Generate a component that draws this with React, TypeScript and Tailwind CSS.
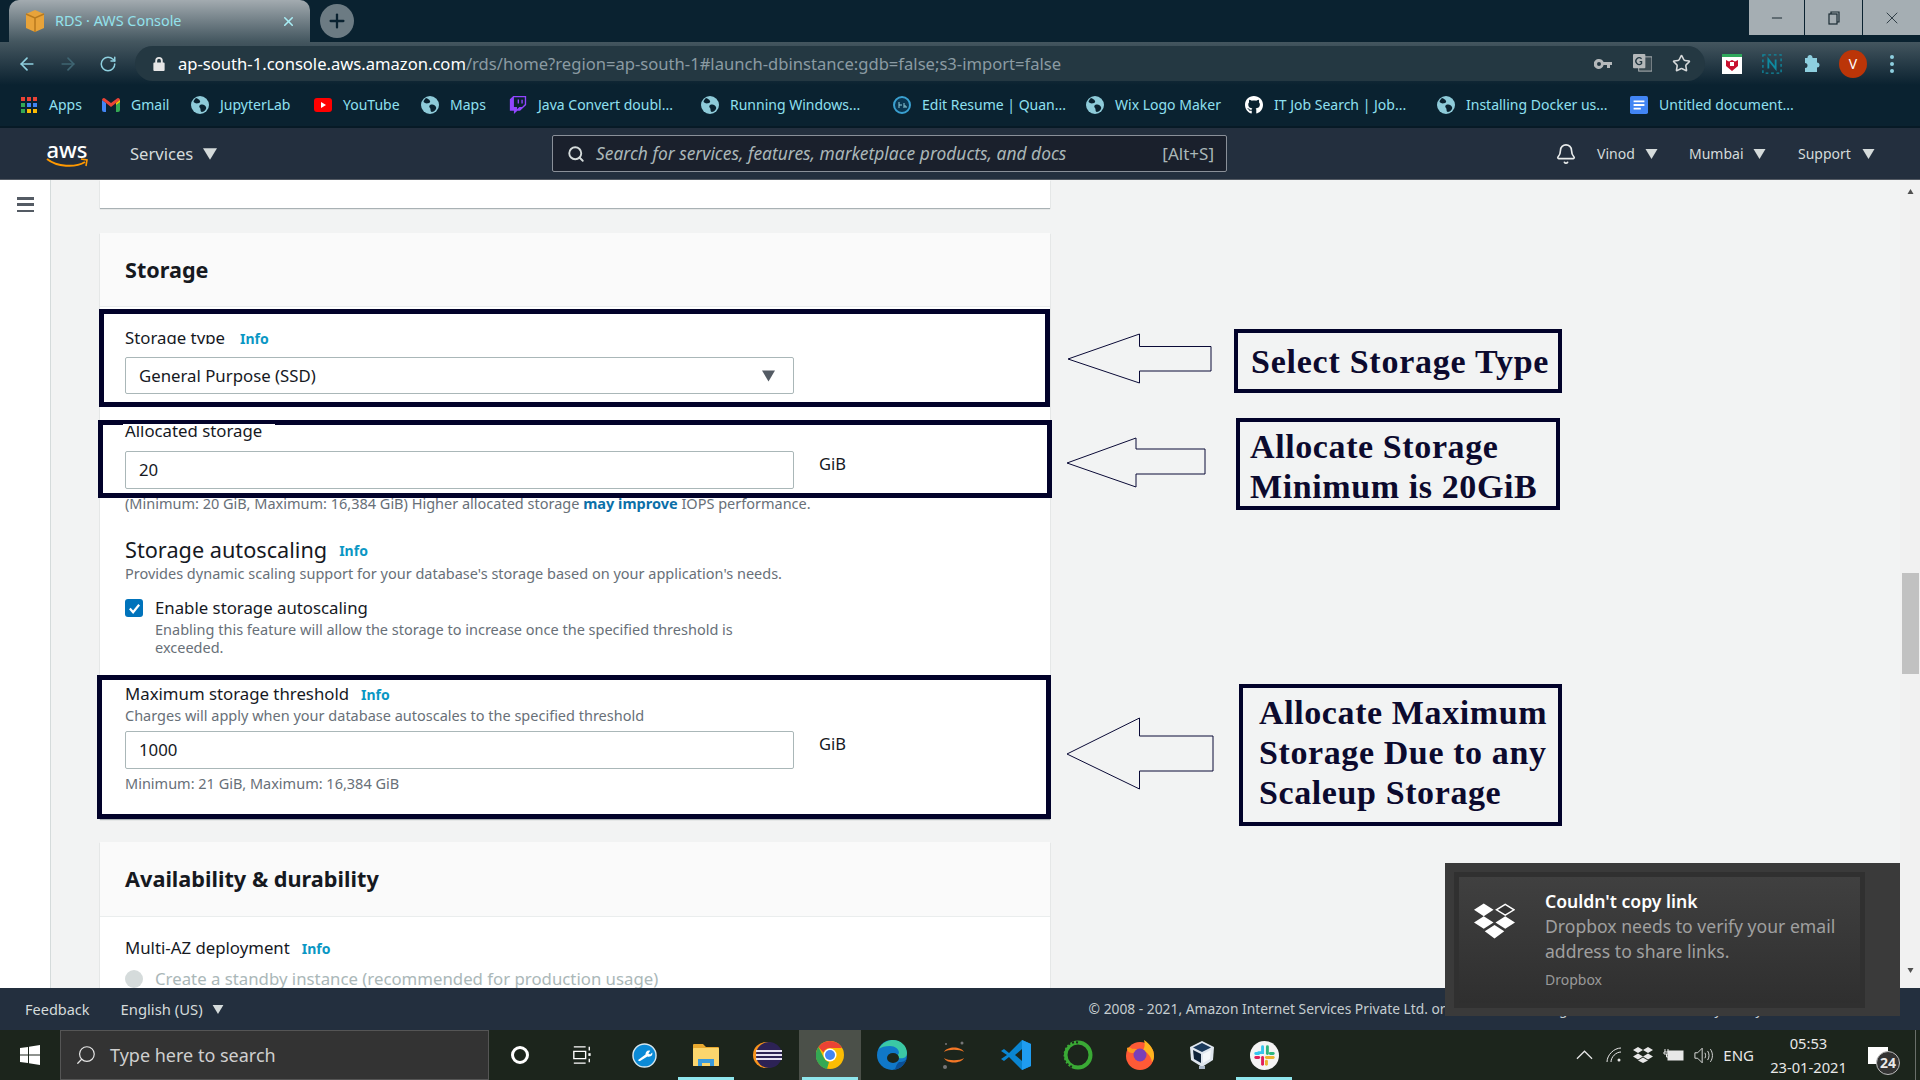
import { ArrowLeft, ArrowRight, RotateCw, Star, Bell, Search, Plus, X, Minus } from "lucide-react";
import { FaGithub, FaTwitch } from "react-icons/fa";
import type { ReactNode } from "react";

const Caret = ({ className }: { className: string }) => (
  <svg viewBox="0 0 12 10" className={`shrink-0 ${className}`}>
    <path d="M0 0h12L6 10z" fill="currentColor" />
  </svg>
);

const Globe = () => (
  <svg viewBox="0 0 18 18" className="w-[18px] h-[18px]">
    <circle cx="9" cy="9" r="9" fill="#8ecbd9" />
    <path d="M5 2c2 1 3 1 4 3S6 8 4 7 2 5 5 2zM9 9c3-1 5 0 6 2s-2 5-4 5-1-3-2-4-1-2 0-3z" fill="#0a2230" />
  </svg>
);

const Gmail = () => (
  <svg viewBox="0 0 18 14" className="w-[18px] h-[14px]">
    <path d="M0 2v10a2 2 0 0 0 2 2h2V5z" fill="#4285f4" />
    <path d="M18 2v10a2 2 0 0 1-2 2h-2V5z" fill="#34a853" />
    <path d="M0 2a2 2 0 0 1 3-1.6L9 5l6-4.6A2 2 0 0 1 18 2l-4 3-5 4-5-4z" fill="#ea4335" />
    <path d="M14 5l4-3v2l-4 3z" fill="#fbbc04" />
  </svg>
);

const Apps = () => (
  <div className="grid grid-cols-3 gap-[2px] w-[16px]">
    {["#ea4335", "#ea4335", "#ea4335", "#34a853", "#4285f4", "#4285f4", "#34a853", "#fbbc04", "#fbbc04"].map((c, i) => (
      <svg key={i} viewBox="0 0 4 4" className="w-[4px] h-[4px]">
        <rect width="4" height="4" fill={c} />
      </svg>
    ))}
  </div>
);

const YouTube = () => (
  <svg viewBox="0 0 18 14" className="w-[18px] h-[14px]">
    <rect width="18" height="14" rx="3" fill="#f00" />
    <path d="M7 4l5 3-5 3z" fill="#fff" />
  </svg>
);

const Doc = () => (
  <svg viewBox="0 0 20 20" className="w-[20px] h-[20px]">
    <rect width="20" height="20" rx="2" fill="#4285f4" />
    <path d="M4 5h12v2H4zM4 9h12v2H4zM4 13h8v2H4z" fill="#fff" />
  </svg>
);

const EditIcon = () => (
  <svg viewBox="0 0 18 18" className="w-[18px] h-[18px]">
    <circle cx="9" cy="9" r="8" fill="#0a3550" stroke="#3aa0d0" strokeWidth="2" />
    <path d="M6 6v6M6 9h3M11 7v5M11 10h2v2" stroke="#8ecbd9" strokeWidth="1" fill="none" />
  </svg>
);

const bookmarks: { label: string; width: string; icon: ReactNode }[] = [
  { label: "Apps", width: "w-[82px]", icon: <Apps /> },
  { label: "Gmail", width: "w-[89px]", icon: <Gmail /> },
  { label: "JupyterLab", width: "w-[123px]", icon: <Globe /> },
  { label: "YouTube", width: "w-[107px]", icon: <YouTube /> },
  { label: "Maps", width: "w-[88px]", icon: <Globe /> },
  { label: "Java Convert doubl...", width: "w-[192px]", icon: <FaTwitch className="w-[18px] h-[20px] text-[#9146ff]" /> },
  { label: "Running Windows...", width: "w-[192px]", icon: <Globe /> },
  { label: "Edit Resume | Quan...", width: "w-[193px]", icon: <EditIcon /> },
  { label: "Wix Logo Maker", width: "w-[159px]", icon: <Globe /> },
  { label: "IT Job Search | Job...", width: "w-[192px]", icon: <FaGithub className="w-[20px] h-[20px] text-white" /> },
  { label: "Installing Docker us...", width: "w-[193px]", icon: <Globe /> },
  { label: "Untitled document...", width: "w-[180px]", icon: <Doc /> },
];

const TabStrip = () => (
  <div className="h-[42px] bg-[#0a2230] flex items-end relative shrink-0">
    <div className="ml-[9px] w-[301px] h-[42px] rounded-t-[10px] bg-gradient-to-b from-[#a3abb0] to-[#43565f] flex items-center pl-[16px] pr-[14px]">
      <svg viewBox="0 0 20 22" className="w-[20px] h-[22px]">
        <path d="M10 0l9 4v14l-9 4-9-4V4z" fill="#e8a33a" />
        <path d="M10 8v14M1 4l9 4 9-4" stroke="#b87a1e" strokeWidth="1.5" fill="none" />
      </svg>
      <span className="ml-[10px] text-[14.4px] leading-[20px] -mt-[1px] text-[#93e2ec] flex-1">RDS · AWS Console</span>
      <X className="w-[15px] h-[15px] text-[#a9eef5]" strokeWidth={2.5} />
    </div>
    <div className="ml-[10px] mb-[4px] w-[34px] h-[34px] rounded-full bg-[#6c7b83] flex items-center justify-center">
      <Plus className="w-[22px] h-[22px] text-[#0a2230]" strokeWidth={2.5} />
    </div>
    <div className="ml-auto self-start flex h-[35px] bg-[#a5aeb3] divide-x divide-[#0a2230] text-[#1a2a33]">
      <div className="w-[56px] flex items-center justify-center"><Minus className="w-[16px] h-[16px]" strokeWidth={1.5} /></div>
      <div className="w-[58px] flex items-center justify-center">
        <svg viewBox="0 0 12 14" className="w-[12px] h-[14px]" fill="none" stroke="currentColor" strokeWidth="1.2">
          <rect x="1" y="3" width="8" height="10" />
          <path d="M3 3V1h8v10H9" />
        </svg>
      </div>
      <div className="w-[57px] flex items-center justify-center"><X className="w-[20px] h-[20px]" strokeWidth={1} /></div>
    </div>
  </div>
);

const Toolbar = () => (
  <div className="h-[43px] bg-gradient-to-b from-[#44565f] to-[#0a2230] flex items-center shrink-0 text-[#8fd0df]">
    <div className="w-[135px] flex items-center pl-[17px] gap-[21px]">
      <ArrowLeft className="w-[20px] h-[20px]" strokeWidth={2} />
      <ArrowRight className="w-[20px] h-[20px] text-[#3f6572]" strokeWidth={2} />
      <RotateCw className="w-[18px] h-[18px]" strokeWidth={2} />
    </div>
    <div className="w-[1570px] h-[35px] rounded-full bg-[#243842] flex items-center pl-[18px] pr-[14px]">
      <svg viewBox="0 0 12 16" className="w-[12px] h-[15px] text-[#e6e6e6]">
        <path d="M2 7V5a4 4 0 0 1 8 0v2h1a1 1 0 0 1 1 1v7a1 1 0 0 1-1 1H1a1 1 0 0 1-1-1V8a1 1 0 0 1 1-1zm2 0h4V5a2 2 0 0 0-4 0z" fill="currentColor" />
      </svg>
      <span className="ml-[13px] mt-[1px] text-[16.6px] leading-[24px] text-[#8b9ba3] flex-1 whitespace-nowrap">
        <span className="text-white">ap-south-1.console.aws.amazon.com</span>/rds/home?region=ap-south-1#launch-dbinstance:gdb=false;s3-import=false
      </span>
      <svg viewBox="0 0 18 10" className="w-[18px] h-[10px] text-[#b4b8ba] mr-[21px]">
        <path d="M5 0a5 5 0 0 1 4.6 3H18v3h-2v3h-3V6H9.6A5 5 0 1 1 5 0zm0 3a2 2 0 1 0 0 4 2 2 0 0 0 0-4z" fill="currentColor" />
      </svg>
      <svg viewBox="0 0 20 20" className="w-[19px] h-[19px] mr-[20px]">
        <rect x="6" y="3" width="14" height="15" fill="#3b4b53" stroke="#b4b8ba" />
        <rect x="0" y="0" width="13" height="15" rx="1" fill="#b4b8ba" />
        <path d="M9 5a3.5 3.5 0 1 0 0 5V8H7" stroke="#243842" strokeWidth="1.4" fill="none" />
      </svg>
      <Star className="w-[19px] h-[19px] text-[#d6d9da]" strokeWidth={2} />
    </div>
    <div className="flex items-center">
      <svg viewBox="0 0 20 20" className="ml-[17px] w-[20px] h-[20px]">
        <rect width="20" height="20" fill="#fff" />
        <rect width="20" height="3" fill="#2fa85c" />
        <path d="M4 6l3 1.500 3-1.500 3 1.500 3-1.500v6l-6 5-6-5z" fill="#c8102e" />
        <rect x="8" y="8" width="4" height="4" fill="#fff" />
      </svg>
      <svg viewBox="0 0 22 22" className="ml-[20px] w-[20px] h-[20px]">
        <rect x="1" y="1" width="20" height="20" fill="none" stroke="#0f8aa0" strokeWidth="1.5" strokeDasharray="3 3" />
        <path d="M7 16V6l8 10V6" fill="none" stroke="#0f8aa0" strokeWidth="2" />
      </svg>
      <svg viewBox="0 0 20 20" className="ml-[20px] w-[20px] h-[20px]">
        <path d="M8 1a2.500 2.500 0 0 1 2.500 3H15v4.500a2.500 2.500 0 1 1 0 5V18H3v-4a2.500 2.500 0 1 0 0-5V4h2.500A2.500 2.500 0 0 1 8 1z" fill="#8ecfdf" />
      </svg>
      <div className="ml-[17px] w-[28px] h-[28px] rounded-full bg-[#bb3508] flex items-center justify-center text-white text-[14px]">V</div>
      <div className="ml-[23px] flex flex-col gap-[3px]">
        <div className="w-[4px] h-[4px] rounded-full bg-[#8ecfdf]" />
        <div className="w-[4px] h-[4px] rounded-full bg-[#8ecfdf]" />
        <div className="w-[4px] h-[4px] rounded-full bg-[#8ecfdf]" />
      </div>
    </div>
  </div>
);

const BookmarkBar = () => (
  <div className="h-[43px] bg-[#0a2230] border-b-2 border-[#071a26] flex items-center pl-[20px] pb-[2px] text-[14px] text-[#8fe0f0] shrink-0 whitespace-nowrap">
    {bookmarks.map((b) => (
      <div key={b.label} className={`${b.width} flex items-center gap-[11px] shrink-0`}>
        <div className="w-[18px] flex items-center justify-center">{b.icon}</div>
        <span>{b.label}</span>
      </div>
    ))}
  </div>
);

const AwsNav = () => (
  <div className="h-[52px] bg-[#232f3e] border-b border-[#545b64] flex items-center shrink-0 text-[#d5dbdb] whitespace-nowrap">
    <div className="ml-[46px] w-[42px] flex flex-col items-center">
      <span className="text-[22px] leading-[18px] text-white font-medium">aws</span>
      <svg viewBox="0 0 42 10" className="w-[42px] h-[10px]">
        <path d="M1 1c10 8 28 9 38 3" stroke="#f90" strokeWidth="2" fill="none" />
        <path d="M35 1l6 1-1 6" stroke="#f90" strokeWidth="1.6" fill="none" />
      </svg>
    </div>
    <span className="ml-[42px] w-[65px] text-[16.6px] leading-[24px]">Services</span>
    <Caret className="ml-[8px] w-[14px] h-[12px]" />
    <div className="ml-[335px] w-[675px] h-[37px] bg-[#1a202c] border border-[#8a9099] rounded-[2px] flex items-center pl-[14px] pr-[12px] shrink-0">
      <Search className="w-[18px] h-[18px] text-[#d5dbdb]" strokeWidth={2.5} />
      <span className="ml-[11px] flex-1 italic text-[17.400px] text-[#aab7b8]">Search for services, features, marketplace products, and docs</span>
      <span className="text-[17px] text-[#aab7b8]">[Alt+S]</span>
    </div>
    <Bell className="ml-[328px] w-[22px] h-[24px] text-[#e8ecec]" strokeWidth={1.8} />
    <span className="ml-[20px] mt-[1px] w-[39px] text-[14px] leading-[20px]">Vinod</span>
    <Caret className="ml-[9px] w-[13px] h-[10px]" />
    <span className="ml-[31px] mt-[1px] w-[56px] text-[14px] leading-[20px]">Mumbai</span>
    <Caret className="ml-[8px] w-[13px] h-[10px]" />
    <span className="ml-[32px] mt-[1px] w-[57px] text-[14px] leading-[20px]">Support</span>
    <Caret className="ml-[7px] w-[13px] h-[10px]" />
  </div>
);

const InfoLink = ({ className = "" }: { className?: string }) => (
  <span className={`text-[14px] leading-[20px] font-bold text-[#0a97c4] ${className}`}>Info</span>
);

const Field = ({ children, suffix }: { children: ReactNode; suffix?: boolean }) => (
  <div className="flex items-start">
    <div className="w-[669px] h-[38px] border border-[#aab7b8] rounded-[2px] bg-white flex items-center px-[13px] text-[16.800px] text-[#16191f]">
      {children}
    </div>
    {suffix && <span className="ml-[25px] mt-[3px] text-[16.500px] leading-[20px] text-[#16191f]">GiB</span>}
  </div>
);

const StorageCard = () => (
  <div className="mt-[25px] bg-white shadow-[0_1px_1px_0_rgba(0,28,36,0.3)]">
    <div className="h-[74px] bg-[#fafafa] border-b border-[#eaeded] flex items-center pl-[25px] pt-[1px]">
      <h2 className="text-[21.600px] font-bold text-[#16191f]">Storage</h2>
    </div>
    <div className="pl-[25px] pb-[26px] text-[#16191f]">
      <div className="mt-[21px] h-[20px] flex items-start">
        <span className="block h-[16px] overflow-hidden text-[16.800px] leading-[20px]">Storage type</span>
        <InfoLink className="ml-[15px] mt-[1px]" />
      </div>
      <div className="mt-[9px]">
        <div className="w-[669px] h-[37px] border border-[#aab7b8] rounded-[2px] flex items-center justify-between pl-[13px] pr-[18px] text-[16.800px]">
          <span>General Purpose (SSD)</span>
          <Caret className="w-[13px] h-[12px] text-[#545b64]" />
        </div>
      </div>
      <div className="mt-[27px] text-[16.800px] leading-[20px]">Allocated storage</div>
      <div className="mt-[10px]">
        <Field suffix>20</Field>
      </div>
      <p className="mt-[4px] text-[14.500px] leading-[20px] text-[#687078]">
        (Minimum: 20 GiB, Maximum: 16,384 GiB) Higher allocated storage <span className="font-bold text-[#0b6fa8]">may improve</span> IOPS performance.
      </p>
      <div className="mt-[23px] h-[27px] flex items-center">
        <span className="text-[21.700px] leading-[26px]">Storage autoscaling</span>
        <InfoLink className="ml-[12px] mt-[3px]" />
      </div>
      <p className="text-[14.500px] leading-[20px] text-[#687078]">Provides dynamic scaling support for your database's storage based on your application's needs.</p>
      <div className="mt-[15px] flex items-start">
        <div className="mt-[1px] w-[18px] h-[18px] rounded-[3px] bg-[#0073bb] flex items-center justify-center">
          <svg viewBox="0 0 14 14" className="w-[13px] h-[13px]">
            <path d="M2 7l3.500 4L12 3" fill="none" stroke="#fff" strokeWidth="2.4" />
          </svg>
        </div>
        <div className="ml-[12px]">
          <div className="text-[16.800px] leading-[20px]">Enable storage autoscaling</div>
          <p className="mt-[2px] w-[610px] text-[14.500px] leading-[18px] text-[#687078]">
            Enabling this feature will allow the storage to increase once the specified threshold is exceeded.
          </p>
        </div>
      </div>
      <div className="mt-[28px] flex items-start">
        <span className="text-[16.800px] leading-[20px]">Maximum storage threshold</span>
        <InfoLink className="ml-[12px] mt-[1px]" />
      </div>
      <p className="text-[14.500px] leading-[20px] text-[#687078]">Charges will apply when your database autoscales to the specified threshold</p>
      <div className="mt-[6px]">
        <Field suffix>1000</Field>
      </div>
      <p className="mt-[4px] text-[14.500px] leading-[20px] text-[#687078]">Minimum: 21 GiB, Maximum: 16,384 GiB</p>
    </div>
  </div>
);

const AvailabilityCard = () => (
  <div className="mt-[23px] bg-white shadow-[0_1px_1px_0_rgba(0,28,36,0.3)]">
    <div className="h-[75px] bg-[#fafafa] border-b border-[#eaeded] flex items-center pl-[25px]">
      <h2 className="text-[21.700px] font-bold text-[#16191f]">Availability & durability</h2>
    </div>
    <div className="pl-[25px] pb-[20px]">
      <div className="mt-[21px] flex items-start">
        <span className="text-[16.800px] leading-[20px] text-[#16191f]">Multi-AZ deployment</span>
        <InfoLink className="ml-[12px] mt-[1px]" />
      </div>
      <div className="mt-[10px] flex items-center">
        <div className="w-[18px] h-[18px] rounded-full bg-[#d5dbdb]" />
        <span className="ml-[12px] text-[16.800px] leading-[20px] text-[#aab7b8]">Create a standby instance (recommended for production usage)</span>
      </div>
    </div>
  </div>
);

const Footer = () => (
  <div className="h-[42px] pt-[1px] bg-[#232f3e] flex items-center shrink-0 text-[14.500px] text-[#d5dbdb] whitespace-nowrap">
    <span className="ml-[25px]">Feedback</span>
    <span className="ml-[31px] text-[14.800px]">English (US)</span>
    <Caret className="ml-[9px] w-[12px] h-[9px]" />
    <span className="ml-[865px] text-[13.800px] text-[#c5cdd0]">
      © 2008 - 2021, Amazon Internet Services Private Ltd. or its affiliates. All rights reserved.
      <span className="ml-[24px]">Privacy Policy</span>
      <span className="ml-[24px]">Terms of Use</span>
    </span>
  </div>
);

const ChromeIcon = () => (
  <svg viewBox="0 0 28 28" className="w-[28px] h-[28px]">
    <circle cx="14" cy="14" r="14" fill="#fbbc04" />
    <path d="M14 0a14 14 0 0 1 12.100 7H14a7 7 0 0 0-6.500 4.500L2.500 6A14 14 0 0 1 14 0z" fill="#ea4335" />
    <path d="M2.500 6l5.500 11a7 7 0 0 0 5 4l-2 7A14 14 0 0 1 2.500 6z" fill="#34a853" />
    <circle cx="14" cy="14" r="6.500" fill="#fff" />
    <circle cx="14" cy="14" r="5" fill="#4285f4" />
  </svg>
);

const EdgeIcon = () => (
  <svg viewBox="0 0 30 30" className="w-[30px] h-[30px]">
    <circle cx="15" cy="15" r="15" fill="#1078c8" />
    <path d="M2 9C5 2 12 0 16 0c8 0 14 6 14 13 0 5-5 6-8 5-3-1-1-3 0-5 0-4-4-7-9-7-5 0-9 1-11 3z" fill="#3bc8a4" />
    <path d="M30 18c-2 7-8 12-14 12 4-1 2-5 6-8 3 0 6 0 8-4z" fill="#0a4f96" />
    <ellipse cx="16" cy="18" rx="6" ry="5" fill="#1c261c" />
  </svg>
);

const SlackIcon = () => (
  <svg viewBox="0 0 30 30" className="w-[29px] h-[29px]">
    <circle cx="15" cy="15" r="15" fill="#f4f4f4" />
    <path d="M13 6v6H9" stroke="#36c5f0" strokeWidth="3" strokeLinecap="round" fill="none" />
    <path d="M18 6v7" stroke="#2eb67d" strokeWidth="3" strokeLinecap="round" fill="none" />
    <path d="M24 13h-3" stroke="#2eb67d" strokeWidth="3" strokeLinecap="round" fill="none" />
    <path d="M24 17h-7" stroke="#ecb22e" strokeWidth="3" strokeLinecap="round" fill="none" />
    <path d="M17 24v-3" stroke="#ecb22e" strokeWidth="3" strokeLinecap="round" fill="none" />
    <path d="M13 17v7" stroke="#e01e5a" strokeWidth="3" strokeLinecap="round" fill="none" />
    <path d="M6 17h3" stroke="#e01e5a" strokeWidth="3" strokeLinecap="round" fill="none" />
    <path d="M6 13h3" stroke="#36c5f0" strokeWidth="3" strokeLinecap="round" fill="none" />
  </svg>
);

const taskIcons: { key: string; icon: ReactNode; active?: boolean; line?: boolean }[] = [
  { key: "cortana", icon: <div className="w-[18px] h-[18px] rounded-full border-[3px] border-white" /> },
  {
    key: "taskview",
    icon: (
      <svg viewBox="0 0 20 22" className="w-[20px] h-[20px]" stroke="#fff" fill="none" strokeWidth="1.500">
        <path d="M1 2h13M1 7h13v8H1zM1 20h13M18 2v4M18 15v4" />
        <rect x="17" y="9" width="2.500" height="3" fill="#fff" stroke="none" />
      </svg>
    ),
  },
  {
    key: "wrench",
    icon: (
      <svg viewBox="0 0 26 26" className="w-[25px] h-[25px]">
        <circle cx="13" cy="13" r="12" fill="#0b8ad6" stroke="#d5e6ee" strokeWidth="1.500" />
        <path d="M6 18l8-6c0-3 2-5 5-4l-2 3 2 1 2-2c1 3-2 5-5 4l-8 5z" fill="#fff" />
      </svg>
    ),
  },
  {
    key: "explorer",
    line: true,
    icon: (
      <svg viewBox="0 0 28 24" className="w-[28px] h-[24px]">
        <path d="M1 2a1 1 0 0 1 1-1h9l3 3h12a1 1 0 0 1 1 1v18H1z" fill="#e8a92f" />
        <rect x="1" y="5" width="26" height="18" rx="1" fill="#fbd66d" />
        <path d="M6 23v-7h16v7h-4v-3h-8v3z" fill="#3a9bdc" />
      </svg>
    ),
  },
  {
    key: "eclipse",
    icon: (
      <svg viewBox="0 0 30 30" className="w-[30px] h-[30px]">
        <circle cx="13" cy="15" r="13" fill="#f7941e" />
        <circle cx="16" cy="15" r="13" fill="#2c2255" />
        <path d="M3 11h26M3 15h26M3 19h26" stroke="#e8e4f4" strokeWidth="2" />
      </svg>
    ),
  },
  { key: "chrome", active: true, line: true, icon: <ChromeIcon /> },
  { key: "edge", icon: <EdgeIcon /> },
  {
    key: "jupyter",
    icon: (
      <svg viewBox="0 0 26 30" className="w-[26px] h-[30px]">
        <path d="M3 12c3-6 17-6 20 0-4-3-16-3-20 0zM3 18c3 6 17 6 20 0-4 3-16 3-20 0z" fill="#f37726" />
        <circle cx="21" cy="3" r="1.500" fill="#767677" />
        <circle cx="4" cy="27" r="2" fill="#767677" />
        <circle cx="5" cy="4" r="1" fill="#767677" />
      </svg>
    ),
  },
  {
    key: "vscode",
    icon: (
      <svg viewBox="0 0 30 30" className="w-[30px] h-[30px]">
        <path d="M21 0l9 4v22l-9 4L8 17l-5 4-3-2 6-4-6-4 3-2 5 4z" fill="#0a85d1" />
        <path d="M21 0l9 4v22l-9 4z" fill="#1f9cf0" />
        <path d="M21 9l-7 6 7 6z" fill="#1c261c" />
      </svg>
    ),
  },
  {
    key: "ring",
    icon: (
      <svg viewBox="0 0 30 30" className="w-[30px] h-[30px]">
        <circle cx="15" cy="15" r="12.500" fill="none" stroke="#3aaa35" strokeWidth="4" />
        <path d="M15 2.500A12.500 12.500 0 0 0 10 27" fill="none" stroke="#1c261c" strokeWidth="2" strokeDasharray="2 2" />
      </svg>
    ),
  },
  {
    key: "firefox",
    icon: (
      <svg viewBox="0 0 30 30" className="w-[30px] h-[30px]">
        <circle cx="15" cy="16" r="14" fill="#ff5a36" />
        <path d="M19 0c6 4 10 9 10 16 0 2-1 5-2 6-1-7-6-10-9-12 2-3 2-6 1-10z" fill="#ffb41e" />
        <path d="M2 8c0 4 3 5 6 5 4-2 8-1 10 1-3-4-8-6-11-5 0-1-3-2-5-1z" fill="#ff9a1e" />
        <circle cx="15" cy="15" r="6.500" fill="#7b3fb8" />
      </svg>
    ),
  },
  {
    key: "vbox",
    icon: (
      <svg viewBox="0 0 26 30" className="w-[26px] h-[30px]">
        <path d="M13 1l12 6-1 13-11 7-11-7L1 7z" fill="#dfe6ee" />
        <path d="M13 3l9 4.500-9 4.500-9-4.500z" fill="#1b3a5c" />
        <path d="M4 10l8 4v9l-7-4z" fill="#0e2238" />
        <path d="M22 10l-8 4v9l7-4z" fill="#f4f7fa" />
        <rect x="10" y="26" width="6" height="3" fill="#aab7c8" />
      </svg>
    ),
  },
  { key: "slack", line: true, icon: <SlackIcon /> },
];

const TaskBar = () => (
  <div className="h-[50px] bg-[#1c251c] flex items-stretch shrink-0 text-white">
    <div className="w-[60px] flex items-center justify-center">
      <svg viewBox="0 0 20 20" className="w-[20px] h-[20px]" fill="#fff">
        <path d="M0 3l8-1v7.500H0zM9 1.800L20 0v9.500H9zM0 10.500h8V18l-8-1zM9 10.500h11V20L9 18.200z" />
      </svg>
    </div>
    <div className="w-[429px] bg-[#333333] border border-[#555] flex items-center pl-[14px]">
      <Search className="w-[22px] h-[22px] text-[#e6e6e6] -scale-x-100" strokeWidth={1.300} />
      <span className="ml-[13px] text-[18px] text-[#cfcfcf]">Type here to search</span>
    </div>
    {taskIcons.map((t) => (
      <div key={t.key} className={`relative w-[62px] flex items-center justify-center ${t.active ? "bg-[#4b5049]" : ""}`}>
        {t.icon}
        {t.line && <div className="absolute bottom-0 left-[3px] right-[3px] h-[3px] bg-[#8fe6ec]" />}
      </div>
    ))}
    <div className="ml-auto flex items-center text-[#e8e8e8]">
      <svg viewBox="0 0 18 10" className="w-[17px] h-[10px]" fill="none" stroke="currentColor" strokeWidth="1.300">
        <path d="M1 9l8-8 8 8" />
      </svg>
      <svg viewBox="0 0 16 16" className="ml-[13px] w-[16px] h-[16px]" fill="none" stroke="currentColor" strokeWidth="1">
        <path d="M1 15C1 8 8 1 15 1M5 15c0-5 5-10 10-10" />
        <circle cx="13" cy="13" r="1.500" fill="currentColor" stroke="none" />
      </svg>
      <svg viewBox="0 0 20 16" className="ml-[11px] w-[20px] h-[16px]" fill="currentColor">
        <path d="M5 0l5 3-5 3-5-3zM15 0l5 3-5 3-5-3zM5 6.500l5 3-5 3-5-3zM15 6.500l5 3-5 3-5-3zM10 10.500l5 3-5 2.500-5-2.500z" />
      </svg>
      <svg viewBox="0 0 22 12" className="ml-[10px] w-[22px] h-[12px]" fill="none" stroke="currentColor">
        <rect x="5" y="2" width="15" height="9" fill="currentColor" />
        <path d="M2 0v3M5 0v3M1 3h5v2H1zM3.500 5v3h3" strokeWidth="1" />
      </svg>
      <svg viewBox="0 0 22 18" className="ml-[9px] w-[20px] h-[17px]" fill="none" stroke="currentColor" strokeWidth="1">
        <path d="M1 6h3l5-5v16l-5-5H1zM12 6c1 2 1 4 0 6M15 4c2 3 2 7 0 10M18 2c3 4 3 10 0 14" />
      </svg>
      <span className="ml-[9px] text-[15px]">ENG</span>
      <div className="ml-[17px] w-[75px] flex flex-col items-center text-[14.700px] leading-[24px] whitespace-nowrap">
        <span>05:53</span>
        <span>23-01-2021</span>
      </div>
      <div className="relative ml-[22px] w-[20px] h-[17px] bg-white">
        <div className="absolute -right-[12px] -bottom-[11px] w-[24px] h-[24px] rounded-full bg-[#333] border border-[#bbb] flex items-center justify-center text-[14px] font-bold">24</div>
      </div>
      <div className="ml-[27px] w-[1px] h-[50px] bg-[#6a6f6a]" />
      <div className="w-[4px]" />
    </div>
  </div>
);

const Scrollbar = () => (
  <div className="w-[20px] bg-[#f1f1f1] flex flex-col items-center shrink-0">
    <Caret className="mt-[9px] w-[9px] h-[5px] rotate-180 text-[#505050]" />
    <div className="mt-[379px] w-[17px] h-[101px] bg-[#c1c1c1] shrink-0" />
    <Caret className="mt-[294px] w-[9px] h-[5px] text-[#505050]" />
  </div>
);

const Arrow = ({ className, points, box }: { className: string; points: string; box: string }) => (
  <svg viewBox={box} className={`absolute ${className}`}>
    <polygon points={points} fill="none" stroke="#0a0a36" strokeWidth="1" />
  </svg>
);

const Annotations = () => (
  <>
    <div className="absolute left-[99px] top-[309px] w-[951px] h-[98px] border-[5px] border-[#02022a]" />
    <div className="absolute left-[98px] top-[420px] w-[954px] h-[78px] border-[5px] border-[#02022a]" />
    <div className="absolute left-[123px] top-[424px] w-[152px] h-[2px] bg-white" />
    <div className="absolute left-[97px] top-[675px] w-[954px] h-[144px] border-[5px] border-[#02022a]" />
    <Arrow className="left-[1066px] top-[332px] w-[147px] h-[53px]" box="0 0 147 53" points="2,27 73.500,2 73.500,14.500 145,14.500 145,39 73.500,39 73.500,51" />
    <Arrow className="left-[1065px] top-[436px] w-[142px] h-[53px]" box="0 0 142 53" points="2,27 71,2 71,13 140,13 140,38 71,38 71,51" />
    <Arrow className="left-[1065px] top-[716px] w-[150px] h-[75px]" box="0 0 150 75" points="2,38 74.500,2 74.500,20 148,20 148,55 74.500,55 74.500,73" />
    <div className="absolute left-[1234px] top-[329px] w-[328px] h-[64px] border-[4px] border-[#02022a] pl-[13px] font-['Liberation_Serif',serif] font-bold text-[34px] tracking-[0.75px] leading-[57px] text-[#0c0a2e] whitespace-nowrap">Select Storage Type</div>
    <div className="absolute left-[1236px] top-[418px] w-[324px] h-[92px] border-[4px] border-[#02022a] pl-[10px] pt-[5px] font-['Liberation_Serif',serif] font-bold text-[34px] tracking-[0.6px] leading-[40px] text-[#0c0a2e] whitespace-nowrap">
      <div>Allocate Storage</div>
      <div>Minimum is 20GiB</div>
    </div>
    <div className="absolute left-[1239px] top-[684px] w-[323px] h-[142px] border-[4px] border-[#02022a] pl-[16px] pt-[5px] font-['Liberation_Serif',serif] font-bold text-[34px] tracking-[0.6px] leading-[40px] text-[#0c0a2e] whitespace-nowrap">
      <div>Allocate Maximum</div>
      <div>Storage Due to any</div>
      <div>Scaleup Storage</div>
    </div>
  </>
);

const Toast = () => (
  <div className="absolute left-[1445px] top-[863px] w-[455px] h-[153px] bg-[#3a3a3a] pt-[9px] pl-[9px]">
    <div className="w-[411px] h-[136px] border-[5px] border-[#303030] bg-gradient-to-b from-[#404040] to-[#2f2f2f] flex pl-[15px] pt-[12px]">
      <svg viewBox="0 0 42 38" className="mt-[14px] w-[41px] h-[38px]">
        <path d="M10 0l10 6.500-10 6.500L0 6.500zM0 19.500L10 13l10 6.500L10 26zM32 13l10 6.500L32 26l-10-6.500zM21 22l10 6.500L21 36l-10-7.500z" fill="#fff" />
        <path d="M32 1l9 5.500-9 5.500-9-5.500z" fill="#333" stroke="#fff" strokeWidth="1.500" />
      </svg>
      <div className="ml-[30px] font-['Noto_Sans',sans-serif]">
        <div className="text-[17.600px] leading-[25px] font-semibold text-white">Couldn't copy link</div>
        <div className="text-[17.600px] leading-[25px] text-[#a0a0a0] whitespace-nowrap">
          <div>Dropbox needs to verify your email</div>
          <div>address to share links.</div>
        </div>
        <div className="mt-[6px] text-[14px] leading-[20px] text-[#9a9a9a]">Dropbox</div>
      </div>
    </div>
  </div>
);

export default function App() {
  return (
    <div className="relative w-[1920px] h-[1080px] overflow-hidden flex flex-col font-['Noto_Sans',sans-serif] bg-[#f2f3f3]">
      <TabStrip />
      <Toolbar />
      <BookmarkBar />
      <AwsNav />
      <div className="flex-1 min-h-0 flex overflow-hidden">
        <div className="w-[51px] bg-white border-r border-[#d5dbdb] shrink-0 pt-[17px] pl-[17px]">
          <div className="w-[17px] h-[15px] flex flex-col justify-between">
            <div className="h-[2.500px] bg-[#545b64]" />
            <div className="h-[2.500px] bg-[#545b64]" />
            <div className="h-[2.500px] bg-[#545b64]" />
          </div>
        </div>
        <div className="flex-1 pl-[49px]">
          <div className="w-[950px]">
            <div className="h-[28px] bg-white shadow-[0_1px_1px_0_rgba(0,28,36,0.3)]" />
            <StorageCard />
            <AvailabilityCard />
          </div>
        </div>
        <Scrollbar />
      </div>
      <Footer />
      <TaskBar />
      <Annotations />
      <Toast />
    </div>
  );
}
